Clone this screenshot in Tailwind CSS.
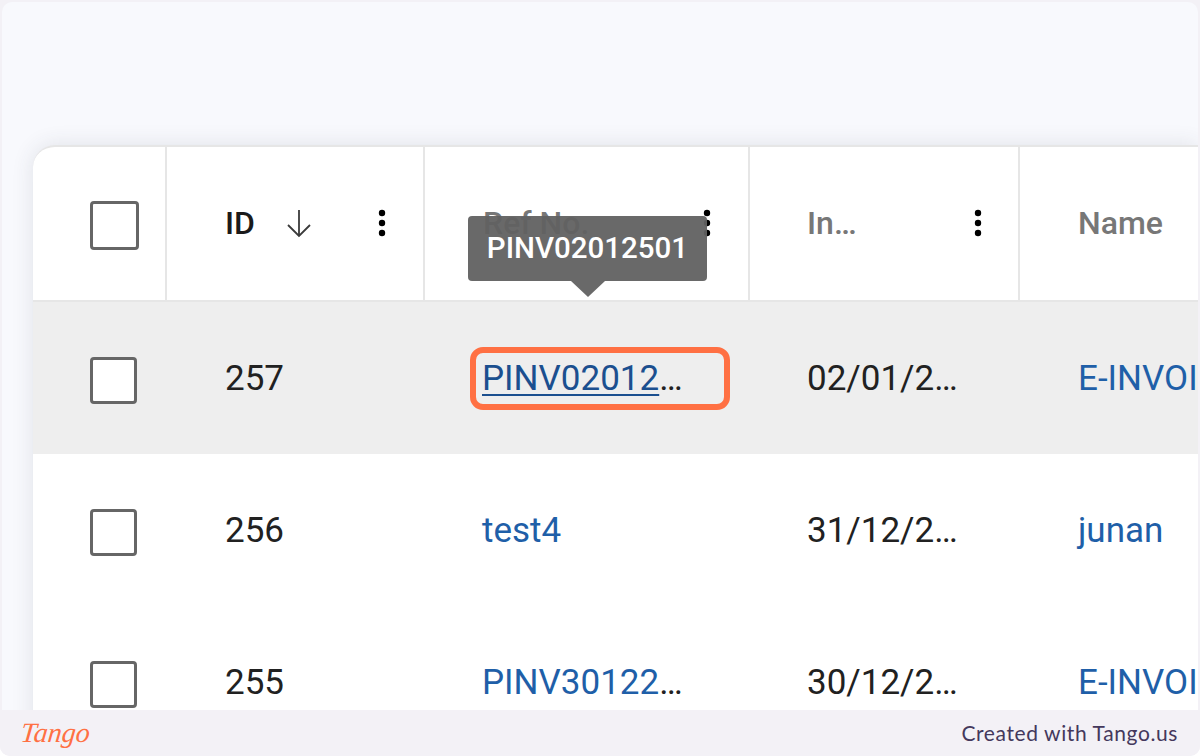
<!DOCTYPE html>
<html>
<head>
<script src="https://cdn.jsdelivr.net/npm/@tailwindcss/browser@4"></script>
</head>
<body class="m-0 bg-white">
<div class="relative w-[1200px] h-[756px] overflow-hidden flex flex-col rounded-b-[10px] bg-[#f3f1f6] font-['Roboto',sans-serif]">
  <main class="h-[708px] mt-[2px] mx-[2px] overflow-hidden rounded-t-[10px] pt-[143px] pl-[31px] bg-[#f8f9fd]">
    <div class="relative w-full rounded-tl-[22px] bg-white border-t-2 border-[#e6e6e6] shadow-[0_0_22px_rgba(50,55,70,0.12)] overflow-hidden">
      <div class="grid grid-cols-[134px_258px_325px_270px_1fr] h-[155px] border-b-2 border-[#e6e6e6] text-[32px] font-medium">
        <div class="flex items-center pl-[57px] pb-[2px] border-r-2 border-[#e6e6e6]">
          <span class="block w-[49px] h-[49px] rounded-[4px] border-[3.5px] border-[#666] mt-[6px]"></span>
        </div>
        <div class="flex items-center pl-[58px] pb-[2px] border-r-2 border-[#e6e6e6] text-[#1a1a1a]">
          <span class="w-[61px]">ID</span>
          <svg class="w-[26px] h-[30px]" viewBox="0 0 26 30" fill="none" stroke="#3a3a3a" stroke-width="1.8"><path d="M13 2V28M2 17L13 28L24 17"/></svg>
          <svg class="ml-[65px] w-[10px] h-[30px]" viewBox="0 0 10 30" fill="#000"><circle cx="5" cy="5" r="3.2"/><circle cx="5" cy="15" r="3.2"/><circle cx="5" cy="25" r="3.2"/></svg>
        </div>
        <div class="flex items-center pl-[58px] pb-[2px] border-r-2 border-[#e6e6e6] text-[#777]">
          <span class="w-[219px]">Ref No.</span>
          <svg class="w-[10px] h-[30px]" viewBox="0 0 10 30" fill="#000"><circle cx="5" cy="5" r="3.2"/><circle cx="5" cy="15" r="3.2"/><circle cx="5" cy="25" r="3.2"/></svg>
        </div>
        <div class="flex items-center pl-[57px] pb-[2px] border-r-2 border-[#e6e6e6] text-[#777]">
          <span class="w-[166px]">In…</span>
          <svg class="w-[10px] h-[30px]" viewBox="0 0 10 30" fill="#000"><circle cx="5" cy="5" r="3.2"/><circle cx="5" cy="15" r="3.2"/><circle cx="5" cy="25" r="3.2"/></svg>
        </div>
        <div class="flex items-center pl-[58px] pb-[2px] text-[#777]">Name</div>
      </div>
      <div class="grid grid-cols-[134px_258px_325px_270px_1fr] h-[152px] pt-[2px] items-center bg-[#eeeeee] text-[35px] text-[#212121]">
        <div class="pl-[57px]"><span class="block w-[47px] h-[47px] mt-[2px] rounded-[4px] border-[3.5px] border-[#666] bg-white"></span></div>
        <div class="pl-[58px]">257</div>
        <div class="pl-[57px] whitespace-nowrap text-[#1b4f8f]"><span class="underline underline-offset-[4px] decoration-2">PINV02012</span><span class="text-[#212121]">…</span></div>
        <div class="pl-[57px] whitespace-nowrap">02/01/2…</div>
        <div class="pl-[58px] whitespace-nowrap overflow-hidden text-[#1f5fa8]">E-INVOICE</div>
      </div>
      <div class="grid grid-cols-[134px_258px_325px_270px_1fr] h-[152px] pt-[2px] items-center text-[35px] text-[#212121]">
        <div class="pl-[57px]"><span class="block w-[47px] h-[47px] mt-[2px] rounded-[4px] border-[3.5px] border-[#666] bg-white"></span></div>
        <div class="pl-[58px]">256</div>
        <div class="pl-[57px] whitespace-nowrap text-[#1f5fa8]">test4</div>
        <div class="pl-[57px] whitespace-nowrap">31/12/2…</div>
        <div class="pl-[58px] whitespace-nowrap overflow-hidden text-[#1f5fa8]">junan</div>
      </div>
      <div class="grid grid-cols-[134px_258px_325px_270px_1fr] h-[152px] pt-[2px] items-center text-[35px] text-[#212121]">
        <div class="pl-[57px]"><span class="block w-[47px] h-[47px] mt-[2px] rounded-[4px] border-[3.5px] border-[#666] bg-white"></span></div>
        <div class="pl-[58px]">255</div>
        <div class="pl-[57px] whitespace-nowrap text-[#1f5fa8]">PINV30122<span class="text-[#212121]">…</span></div>
        <div class="pl-[57px] whitespace-nowrap">30/12/2…</div>
        <div class="pl-[58px] whitespace-nowrap overflow-hidden text-[#1f5fa8]">E-INVOICE</div>
      </div>
    </div>
  </main>
  <footer class="h-[46px] shrink-0 flex items-center justify-between pl-[21px] pr-[22px] bg-[#f3f1f6]">
    <span class="font-['Liberation_Serif',serif] italic text-[28px] leading-none text-[#ff7043] -skew-x-6">Tango</span>
    <span class="font-['Lato',sans-serif] text-[21px] tracking-[0.6px] text-[#44385c]">Created with Tango.us</span>
  </footer>
  <div class="absolute left-[468px] top-[216px] w-[239px] h-[65px] rounded-[4px] bg-[#616161]/95 flex items-center justify-center text-white text-[29.5px] font-medium whitespace-nowrap">PINV02012501</div>
  <div class="absolute left-[571px] top-[281px] w-0 h-0 border-x-[17px] border-x-transparent border-t-[16px] border-t-[#696969]"></div>
  <div class="absolute left-[470px] top-[347px] w-[260px] h-[63px] rounded-[13px] border-[6px] border-[#ff7043]"></div>
</div>
</body>
</html>
